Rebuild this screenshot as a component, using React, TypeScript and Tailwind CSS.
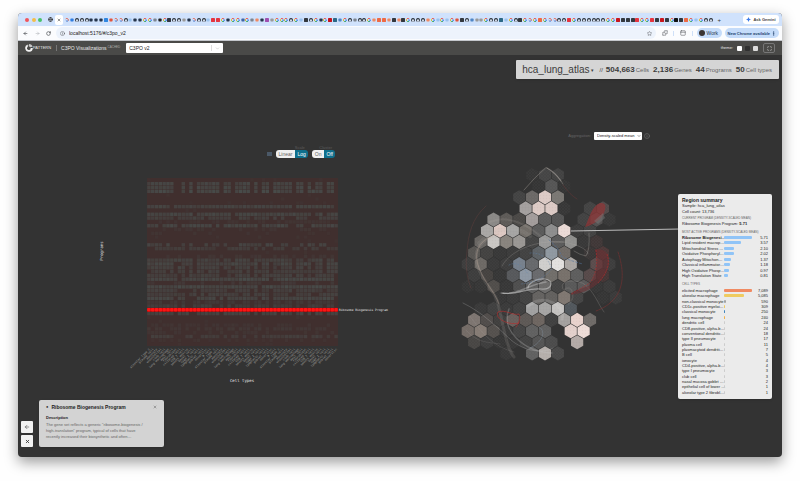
import React from "react";
import { ArrowLeft, ArrowRight, ChevronDown, Globe, Info, Maximize, MoreVertical, PanelTop, Puzzle, RotateCw, Star, X } from "lucide-react";

const FAVICONS =
  "sbhhhkkkBrsshlkkGGgAGDhhwkshhlRRGkGGLGgok" +
  "PwGGGhGlDhGkGXTuGhghhGoOOoDoDGhhhoGlGlGrDhuwwGhhTlG" +
  "hDGsGOGsshhRGhhhhhhGGXDDDRGGRDXDGKDOGlGhh";

const SQUARES: Record<string, string> = {
  B: "#2f86e0", R: "#e5343f", D: "#33383f", X: "#c8161d", T: "#2c6886", O: "#ee6a45", K: "#111111", P: "#a04fb0",
};
const DOTS: Record<string, string> = {
  k: "#26364d", r: "#e2553d", b: "#2f7de0", l: "#9cc3ee", g: "#7d8590", w: "#9a9a9a", o: "#f08a64", u: "#4f86c6", A: "#222222", L: "#3f66a8",
};

function Favicon({ kind }: { kind: string }) {
  return (
    <svg viewBox="0 0 10 10" className="h-[4px] w-[4px] shrink-0">
      {kind === "G" && (
        <g fill="none" strokeWidth="2.4">
          <path d="M8.2 2.4A4 4 0 0 0 1.6 3" stroke="#ea4335" />
          <path d="M1.6 3A4 4 0 0 0 1.8 7.4" stroke="#fbbc05" />
          <path d="M1.8 7.4A4 4 0 0 0 7.6 8" stroke="#34a853" />
          <path d="M7.6 8A4 4 0 0 0 9 5H5" stroke="#4285f4" />
        </g>
      )}
      {kind === "h" && (
        <>
          <circle cx="5" cy="5" r="4.8" fill="#24292f" />
          <path d="M3.4 9.8V7.6C1.6 6.4 2 3.4 5 3.4S8.4 6.4 6.6 7.600V9.800Z" fill="#dfeafa" />
        </>
      )}
      {kind === "s" && (
        <g fill="none" strokeWidth="2.200">
          <path d="M2 2a4 4 0 0 1 6 5" stroke="#e2553d" />
          <path d="M8 7a4 4 0 0 1-6-1" stroke="#3c6fc4" />
        </g>
      )}
      {SQUARES[kind] && <rect width="10" height="10" rx="1" fill={SQUARES[kind]} />}
      {DOTS[kind] && <rect x="1" y="1.500" width="8" height="7" rx="1.500" fill={DOTS[kind]} />}
    </svg>
  );
}

function BrowserChrome() {
  return (
    <header>
      <div className="flex h-[13px] items-center bg-[#d0e2fc] pl-[7px] pr-[3px]">
        <div className="flex w-[17px] shrink-0 justify-between">
          <span className="h-[4px] w-[4px] rounded-full bg-[#f0545c]" />
          <span className="h-[4px] w-[4px] rounded-full bg-[#f3bd4a]" />
          <span className="h-[4px] w-[4px] rounded-full bg-[#48c26a]" />
        </div>
        <Globe className="ml-[6px] h-[5px] w-[5px] shrink-0 text-[#333]" strokeWidth={3} />
        <div className="mx-[2px] flex h-[10px] w-[8px] shrink-0 items-center justify-center rounded-[2px] bg-white">
          <X className="h-[4px] w-[4px] text-[#333]" strokeWidth={3} />
        </div>
        <div className="flex min-w-0 flex-1 items-center justify-between">
          {FAVICONS.split("").map((k, i) => (
            <Favicon key={i} kind={k} />
          ))}
        </div>
        <button className="ml-[4px] text-[6px] leading-[8px] text-[#333]" aria-label="New tab">+</button>
        <button className="ml-[22px] flex h-[9px] w-[36px] shrink-0 items-center justify-center gap-[2px] rounded-[3px] bg-white text-[4px] font-bold leading-[6px] text-[#444]">
          <svg viewBox="0 0 10 10" className="h-[5px] w-[5px]"><path d="M5 0Q5.500 4.500 10 5Q5.500 5.500 5 10Q4.500 5.500 0 5Q4.500 4.500 5 0Z" fill="#3d7be8" /></svg>
          Ask Gemini
        </button>
      </div>
      <div className="flex h-[15px] items-center border-b border-[#c4c7cc] bg-[#fbfcfe] pl-[5px] pr-[3px] text-[#44474c]">
        <button aria-label="Back"><ArrowLeft className="h-[5px] w-[5px]" strokeWidth={3} /></button>
        <button aria-label="Forward" className="ml-[7px] text-[#9a9da2]"><ArrowRight className="h-[5px] w-[5px]" strokeWidth={2} /></button>
        <button aria-label="Reload" className="ml-[6px]"><RotateCw className="h-[5px] w-[5px]" strokeWidth={3} /></button>
        <div className="ml-[5px] flex h-[12px] min-w-0 flex-1 items-center rounded-full bg-[#edf3fc] pl-[4px] pr-[4px]">
          <Info className="h-[5px] w-[5px]" strokeWidth={2} />
          <input aria-label="Address" defaultValue="localhost:5176/#/c3po_v2" className="ml-[4px] min-w-0 flex-1 bg-transparent text-[5px] leading-[8px] text-[#222] outline-none" />
          <Star className="h-[5px] w-[5px]" strokeWidth={2} />
        </div>
        <Puzzle className="ml-[6px] h-[6px] w-[6px]" strokeWidth={2} />
        <span className="ml-[5px] h-[5px] w-px bg-[#cfe0f8]" />
        <PanelTop className="ml-[6px] h-[6px] w-[6px]" strokeWidth={2} />
        <span className="ml-[6px] h-[5px] w-px bg-[#cfe0f8]" />
        <button className="ml-[4px] flex h-[10px] w-[25px] items-center gap-[2px] rounded-full bg-[#c5dcfa] pl-[2px] text-[5px] leading-[7px] text-[#26364d]">
          <span className="h-[6px] w-[6px] rounded-full bg-[#3a3431]" />
          Work
        </button>
        <button className="ml-[3px] flex h-[10px] items-center justify-between gap-[1px] whitespace-nowrap rounded-full bg-[#c5dcfa] px-[3px] text-[4px] font-bold leading-[7px] text-[#26456f]">
          New Chrome available
          <MoreVertical className="h-[5px] w-[5px]" strokeWidth={3} />
        </button>
      </div>
    </header>
  );
}

function AppBar() {
  return (
    <div className="flex h-[14px] items-center bg-[#4a4a48] pl-[7px] pr-[7px] text-[#e6e6e6]">
      <svg viewBox="0 0 20 20" className="h-[8px] w-[8px]">
        <path d="M7 1A9.500 9.500 0 1 0 19.500 10L14 10A4.500 4.500 0 1 1 7 7Z" fill="#f2f2f2" />
        <path d="M10 0A9.500 9.500 0 0 1 19 7L13 8L9 5Z" fill="#c8c8c8" />
      </svg>
      <span className="text-[4px] leading-[6px]">PATTERN</span>
      <span className="ml-[5px] h-[6px] w-px bg-[#777]" />
      <h1 className="ml-[4px] text-[5px] leading-[7px]">C3PO Visualizations</h1>
      <span className="ml-px pb-[3px] text-[3px] leading-[4px] text-[#aaa]">CACHED</span>
      <div className="ml-[6px] flex h-[10px] w-[97px] items-center rounded-[1px] bg-white text-[#222]">
        <select aria-label="Visualization" className="h-full min-w-0 flex-1 appearance-none bg-transparent pl-[3px] text-[5px] leading-[8px]">
          <option>C3PO v2</option>
        </select>
        <span className="h-[6px] w-px bg-[#ddd]" />
        <ChevronDown className="mx-[3px] h-[5px] w-[5px] text-[#aaa]" strokeWidth={2} />
      </div>
      <span className="ml-auto text-[4px] leading-[6px]">theme:</span>
      <button aria-label="Light theme" className="ml-[4px] h-[5px] w-[5px] rounded-[1px] bg-white" />
      <button aria-label="Dark theme" className="ml-[3px] h-[5px] w-[5px] rounded-[1px] bg-[#303030]" />
      <button aria-label="Grey theme" className="ml-[3px] h-[5px] w-[5px] rounded-[1px] bg-[#dcdcdc]" />
      <button aria-label="Fullscreen" className="ml-[5px] flex h-[10px] w-[12px] items-center justify-center rounded-[2px] border border-[#777]">
        <Maximize className="h-[5px] w-[5px]" strokeWidth={2} />
      </button>
    </div>
  );
}

const STATS = [["504,663", "Cells"], ["2,136", "Genes"], ["44", "Programs"], ["50", "Cell types"]];

function DatasetBar() {
  return (
    <div className="flex justify-end pr-[3px] pt-[5px]">
      <div className="flex h-[19px] items-center rounded-[1px] bg-[#d5d5d5] pl-[6px] pr-[7px] text-[#3c3c3c] shadow">
        <button className="flex items-center text-[10px] leading-[14px]">
          hca_lung_atlas <span className="ml-px text-[5px]">▾</span>
        </button>
        <span className="ml-[6px] text-[6px] leading-[8px]">//</span>
        {STATS.map(([n, label], i) => (
          <span key={label} className={`flex items-baseline gap-px whitespace-nowrap ${i ? "ml-[4px]" : "ml-[3px]"}`}>
            <b className="text-[8px] leading-[10px]">{n}</b>
            <span className="text-[6px] leading-[10px] text-[#666]">{label}</span>
          </span>
        ))}
      </div>
    </div>
  );
}

const COLS = 50;
const ROWS = 44;
const COLUMN_MASK = "11111110010101111110110111101011011111011010110110";
// Share of expressed cells per program row: [inside masked columns, outside them, strength]
const ROW_PROFILE: Record<number, [number, number, number]> = {
  1: [1, 0, 0.9], 2: [1, 0.1, 0.9], 3: [1, 0.15, 1], 7: [0.95, 0.75, 0.8], 9: [0.95, 0.6, 0.9], 10: [0.8, 0.7, 0.7],
  11: [0.5, 0.5, 0.25], 12: [0.95, 0.8, 0.9], 13: [0.3, 0.4, 0.25], 14: [0.3, 0.2, 0.2], 15: [0.1, 0.2, 0.2], 17: [0.6, 0.5, 0.8],
  18: [0.7, 0.5, 0.6], 20: [0.4, 0.4, 0.3], 21: [0.95, 0.3, 0.8], 22: [1, 0.2, 0.9], 23: [0.95, 0.3, 0.8], 24: [0.9, 0.4, 0.7],
  25: [0.95, 0.3, 0.7], 26: [1, 0.8, 1], 27: [0.5, 0.5, 0.4], 28: [1, 0.85, 1], 29: [0.9, 0.5, 0.7], 30: [0.9, 0.5, 0.7],
  31: [0.95, 0.5, 0.9], 32: [0.7, 0.4, 0.4], 33: [0.9, 0.3, 0.6], 35: [0.9, 0.3, 0.8], 38: [0.5, 0.5, 0.25], 39: [0.7, 0.6, 0.35],
  40: [0.4, 0.4, 0.25], 41: [0.8, 0.7, 0.6], 42: [0.4, 0.4, 0.2],
};
const SELECTED_ROW = 34;
const PITCH = 3.82;

function noise(a: number, b: number) {
  const v = Math.sin(a * 127.1 + b * 311.7) * 43758.5453;
  return v - Math.floor(v);
}

const CELL_TYPES = [
  "alveolar type 2", "fibroblast", "goblet cell", "club cell", "basal cell", "plasma cell", "ciliated cell", "dendritic", "lung macrophage",
  "type I cell", "monocyte", "CD8 T cell", "B cell", "mast cell", "lymphatic cell", "endothelial", "smooth muscle",
];

function Heatmap() {
  const cells: React.ReactElement[] = [];
  for (let r = 0; r < ROWS; r++) {
    for (let c = 0; c < COLS; c++) {
      const x = 147 + c * PITCH;
      const y = 178 + r * PITCH;
      if (r === SELECTED_ROW) {
        cells.push(<rect key={`${r}-${c}`} x={x + 0.2} y={y + 0.2} width="3.400" height="3.400" rx="1" fill="#ff1414" />);
        continue;
      }
      const profile = ROW_PROFILE[r] ?? [0.05, 0.1, 0.15];
      const share = COLUMN_MASK[c] === "1" ? profile[0] : profile[1];
      const strength = noise(r, c) < share ? profile[2] * (0.65 + 0.35 * noise(c, r + 7)) : 0;
      if (strength > 0) {
        cells.push(<rect key={`${r}-${c}`} x={x + 0.2} y={y + 0.2} width="3.400" height="3.400" fill="#484c4a" opacity={strength} />);
      }
    }
  }
  return (
    <svg viewBox="18 160 382 230" className="block w-full" role="img" aria-label="Program activity by cell type">
      <rect x="147" y="178" width="191" height="168" fill="#402f2e" />
      <rect x="147" y="307.900" width="191" height="3.820" fill="#c00808" />
      {cells}
      <g fontFamily="Liberation Mono, monospace" fill="#a8a8a4">
        {Array.from({ length: COLS }, (_, c) => (
          <text key={c} fontSize="3" textAnchor="end" transform={`translate(${150 + c * PITCH} 349.500) rotate(-45)`}>
            {CELL_TYPES[(c * 5) % CELL_TYPES.length]}
          </text>
        ))}
      </g>
      <g fontFamily="DejaVu Sans Mono, monospace" fill="#e8e8e8">
        <text x="339" y="311" fontSize="3">Ribosome Biogenesis Program</text>
        <text x="242" y="382" fontSize="4" textAnchor="middle">Cell types</text>
        <text fontSize="4" textAnchor="middle" transform="translate(102.500 251) rotate(-90)">Programs</text>
      </g>
    </svg>
  );
}

function Toggle({ label, options }: { label: string; options: [string, string] }) {
  return (
    <div role="group" aria-label={label} className="flex flex-col items-end">
      <span className="pr-[3px] text-[4px] leading-[5px] text-[#5c5c5c]">{label}</span>
      <div className="flex h-[8px] rounded-[3px] text-[5px] leading-[8px]">
        <button className="rounded-l-[3px] bg-[#f0f0f0] px-[3px] text-[#666]">{options[0]}</button>
        <button className="rounded-r-[3px] bg-[#0f6f8c] px-[2px] text-white">{options[1]}</button>
      </div>
    </div>
  );
}

// First index of the hexagon run, then one colour per hexagon; "-" leaves a hole.
const HEX_ROWS: [number, string][] = [
  [-1, "363636 454545 424242"],
  [-1, "353535 555555 353535"],
  [-2, "434343 6b6866 dccac5 7a7773"],
  [-2, "a39f9e dccac5 dccac5 373737 - 434343 524a4a"],
  [-4, "8a8886 5d5a57 4a4846 a29c9b 5a5a5a 555555 - 424242 525050 383838"],
  [-5, "a8a6a4 ddc8c2 a5a4a3 716c67 5a5a5a 8d8d8d ead9d5 3b3b3b 424242"],
  [-5, "686562 c9c6c3 88837d 999693 444444 989898 5a5a5a 8f8f8d 383838 403737"],
  [-6, "575552 434241 383838 3b3b3b 424242 5d6266 8f98a0 6f6a66 - 3a3636 4d3838"],
  [-6, "3d3d3d 6c6864 3a3a3a 3d3d3d 76808c 66686b cfcecc e2e0de a9a5a2 - 5a4c4c 3d3d3d"],
  [-6, "3d3d3d 454240 363636 56585b 8d97a3 68696c 706d69 77706a 5d5d5d 564949 453535"],
  [-6, "353535 363636 504d4a 373737 4e4e4e 5f5f5f 6c6b6a 444444 585858 5a5858 363636 3a3a3a"],
  [-4, "373737 3a3a3a 424242 646260 62605e 7f7771 444444 - 353535 3a3a3a"],
  [-5, "393939 404040 3a3a3a 404040 a0a0a0 a5a4a3 c4c2c0 51575c"],
  [-6, "7d7570 504c4a 403f3e 685f5c 5d5855 6d6560 404040 a3a09e e8d2cc 6e6a67"],
  [-6, "746b66 857b74 54504d 393939 444444 606060 606060 - e3d0cb eedcd7"],
  [-6, "484644 3d3d3d 363636 383838 424242 545454 4b4b4b - b3aaa6"],
  [-3, "383838 - 606060 b5afab 484848"],
];

function hexPoints(cx: number, cy: number) {
  const h = 6.1;
  const r = 7.1;
  return [[0, -r], [h, -r / 2], [h, r / 2], [0, r], [-h, r / 2], [-h, -r / 2]].map(([dx, dy]) => `${cx + dx},${cy + dy}`).join(" ");
}

function HexMap() {
  return (
    <svg viewBox="400 140 382 250" className="block w-full" role="img" aria-label="Cell embedding">
      <defs>
        <pattern id="grain" width="3" height="3" patternUnits="userSpaceOnUse">
          <rect width="1" height="1" fill="#8d8580" />
          <rect x="1.500" y="1.500" width="1" height="1" fill="#ffffff" />
        </pattern>
      </defs>
      {HEX_ROWS.map(([start, colours], r) =>
        colours.split(" ").map((colour, i) => {
          if (colour === "-") return null;
          const cx = (r % 2 ? 551.4 : 545) + 12.87 * (start + i);
          const points = hexPoints(cx, 175 + 11.15 * r);
          return (
            <g key={`${r}-${i}`}>
              <polygon points={points} fill={`#${colour}`} />
              <polygon points={points} fill="url(#grain)" opacity="0.070" />
            </g>
          );
        }),
      )}
      <g fill="none" strokeLinecap="round" stroke="#b9b4ae">
        <path d="M524 190Q534 178 546 167.500Q558 175 563 184" stroke="#a8a09b" strokeWidth="0.700" opacity="0.600" />
        <path d="M547 168Q555 172 561 181" strokeWidth="1.200" opacity="0.400" />
        <path d="M563 185Q570 195 577 199" stroke="#7a3a3a" strokeWidth="0.500" opacity="0.700" />
        <path d="M486 206C472 218 468 235 467 252C465 266 467 278 471 288" stroke="#8a4a48" strokeWidth="0.500" opacity="0.500" />
        <path d="M496 236C480 240 474 250 477 264C482 282 492 288 497 300C503 320 505 346 514 357" strokeWidth="3" opacity="0.160" />
        <path d="M498 234C478 240 473 252 479 268C485 284 494 290 499 304" stroke="#c0aa9a" strokeWidth="1" opacity="0.350" />
        <path d="M502 266C512 248 540 240 562 242C578 244 588 250 588 254" strokeWidth="0.800" opacity="0.300" />
        <path d="M490 222C508 214 528 226 538 234C548 243 556 244 570 240" strokeWidth="2" opacity="0.150" />
        <path d="M479 243C500 222 520 228 530 236" strokeWidth="4" opacity="0.120" />
        <path d="M501 293C516 296 528 287 541 289C553 290 554 280 545 279C534 278 528 285 528 288" stroke="#dddddd" strokeWidth="1.200" opacity="0.500" />
        <path d="M503 293C518 295 530 284 546 282" stroke="#eeeeee" strokeWidth="1.500" opacity="0.300" />
        <path d="M563 289C558 280 576 279 584 284C594 291 598 304 604 312" strokeWidth="0.900" opacity="0.250" />
        <path d="M564 290C572 282 577 300 568 304" strokeWidth="1.500" opacity="0.150" />
        <path d="M463 303C482 312 498 328 511 340C524 351 542 354 553 348" stroke="#c8c8c8" strokeWidth="0.800" opacity="0.300" />
        <path d="M509 309C500 330 524 352 552 353" stroke="#c8c8c8" strokeWidth="1.500" opacity="0.280" />
        <path d="M528 306C545 292 566 307 562 319" stroke="#dddddd" strokeWidth="3" opacity="0.180" />
        <path d="M539 327C548 332 540 344 530 348" stroke="#91a9bd" strokeWidth="0.800" opacity="0.350" />
        <path d="M589 233Q590 250 586 256Q580 255 574 251" strokeWidth="0.900" opacity="0.350" />
        <path d="M466 330C478 344 490 342 500 344M470 316C486 340 499 348 514 352" strokeWidth="0.800" opacity="0.180" />
        <path d="M549 240Q559 248 562 257Q574 262 583 264" stroke="#5274a0" strokeWidth="0.600" strokeDasharray="2 2" />
        <path d="M530 253Q546 252 552 269Q541 282 521 284M509 265Q519 260 528 274" stroke="#5f83ab" strokeWidth="0.600" strokeDasharray="1 2" opacity="0.800" />
        <path d="M618 252C628 282 620 302 596 311" stroke="#8d3030" strokeWidth="0.500" strokeDasharray="2 1" />
        <path d="M519 323C508 326 494 318 498 312C505 309 513 316 519 314C521 318 519 323 516 327" stroke="#b52d2d" strokeWidth="0.800" opacity="0.800" />
      </g>
      <path d="M585 227C589 219 591 207 600 203Q607 202 605 210Q602 222 585 227Z" fill="#933536" opacity="0.700" />
      <path d="M594 221L603 213L605 218L598 224Z" fill="#777777" opacity="0.500" />
      <path d="M595 249Q611 248 609 266Q603 286 580 293L571 295L573 292L590 285Q600 270 595 249Z" fill="#6b3033" opacity="0.600" />
      <path d="M596 250Q599 270 590 283L571 294M607 254Q612 268 598 283" fill="none" stroke="#a82e2e" strokeWidth="0.700" strokeDasharray="2 1" />
      <path d="M571 231L680 229" stroke="#dddddd" strokeWidth="0.800" />
    </svg>
  );
}

const PROGRAMS: [string, string, number][] = [
  ["Ribosome Biogenesi…", "5.71", 28], ["Lipid resident macrop…", "3.57", 17], ["Mitochondrial Stress …", "2.10", 10], ["Oxidative Phosphoryl…", "2.02", 10],
  ["Autophagy Mitochon…", "1.37", 7], ["Classical inflammator…", "1.18", 6], ["High Oxidative Phosp…", "0.97", 5], ["High Translation State", "0.81", 4],
];
const TYPES: [string, string, number, string][] = [
  ["elicited macrophage", "7,089", 28, "#f08a62"], ["alveolar macrophage", "5,085", 20, "#efcb60"], ["non-classical monocyte", "590", 2, "#a3a3a3"],
  ["CD1c-positive myeloi…", "309", 1, "#efcb60"], ["classical monocyte", "250", 1, "#3f84bd"], ["lung macrophage", "240", 1, "#f0b04a"],
  ["dendritic cell", "24", 0, ""], ["CD8-positive, alpha-b…", "24", 0, ""], ["conventional dendritic…", "18", 0, ""], ["type II pneumocyte", "17", 0, ""],
  ["plasma cell", "11", 0, ""], ["plasmacytoid dendriti…", "7", 0, ""], ["B cell", "5", 0, ""], ["ionocyte", "4", 0, ""], ["CD4-positive, alpha-b…", "4", 0, ""],
  ["type I pneumocyte", "3", 0, ""], ["club cell", "3", 0, ""], ["nasal mucosa goblet …", "2", 0, ""], ["epithelial cell of lower …", "1", 0, ""], ["alveolar type 2 fibrobl…", "1", 0, ""],
];

function BarRow({ name, value, width, colour, strong }: { name: string; value: string; width: number; colour: string; strong?: boolean }) {
  return (
    <li className="flex h-[5px] items-center">
      <span className={`w-[42px] shrink-0 whitespace-nowrap text-[4px] leading-[5px] ${strong ? "font-bold" : ""}`}>{name}</span>
      <span className="h-[3px] rounded-[1px]" style={{ width: width || 0.5, background: colour || "#cccccc" }} />
      <span className="ml-auto text-[4px] leading-[5px]">{value}</span>
    </li>
  );
}

function RegionSummary() {
  return (
    <aside className="absolute right-[10px] top-[139px] w-[94px] rounded-[2px] bg-[#ebebeb] px-[4px] pb-[4px] pt-[3px] text-[4px] leading-[5px] text-[#222] shadow">
      <h2 className="text-[5px] font-bold leading-[6px]">Region summary</h2>
      <p className="leading-[6px]">Sample: hca_lung_atlas</p>
      <p>Cell count: 13,736</p>
      <h3 className="mt-[2px] whitespace-nowrap text-[3px] text-[#666]">CURRENT PROGRAM (DENSITY-SCALED MEAN)</h3>
      <p className="whitespace-nowrap">Ribosome Biogenesis Program: <b>5.71</b></p>
      <h3 className="mt-[4px] whitespace-nowrap text-[3px] text-[#666]">MOST ACTIVE PROGRAMS (DENSITY-SCALED MEAN)</h3>
      <ul className="flex h-[43px] flex-col justify-between">
        {PROGRAMS.map(([n, v, w], i) => <BarRow key={n} name={n} value={v} width={w} colour="#90c4f7" strong={i === 0} />)}
      </ul>
      <h3 className="mt-[4px] text-[3px] text-[#666]">CELL TYPES</h3>
      <ul className="mt-px flex h-[107px] flex-col justify-between">
        {TYPES.map(([n, v, w, c]) => <BarRow key={n} name={n} value={v} width={w} colour={c} />)}
      </ul>
    </aside>
  );
}

export default function App() {
  return (
    <div className="flex min-h-screen flex-col bg-[#fefefe] px-[18px] pb-[24px] pt-[13px] font-['Liberation_Sans',Arial,sans-serif]">
      <div className="flex flex-1 flex-col overflow-hidden rounded-[4px] bg-[#333] shadow-[0_5px_14px_rgba(0,0,0,0.4)]">
        <BrowserChrome />
        <AppBar />
        <main className="relative flex flex-1 flex-col">
          <DatasetBar />
          <div className="grid grid-cols-2">
            <section>
              <div className="flex items-end justify-end gap-[4px] pb-[2px] pr-[65px] pt-[66px]">
                <button aria-label="Download" className="mb-[2px] h-[4px] w-[5px] bg-[#4b5968]" />
                <Toggle label="Scale" options={["Linear", "Log"]} />
                <Toggle label="Cluster" options={["On", "Off"]} />
              </div>
              <Heatmap />
            </section>
            <section>
              <div className="flex items-center justify-end pr-[132px] pt-[53px]">
                <label htmlFor="aggregation" className="text-[4px] leading-[8px] text-[#666]">Aggregation:</label>
                <div className="ml-[3px] flex h-[8px] w-[48px] items-center rounded-[1px] bg-white">
                  <select id="aggregation" className="h-full min-w-0 flex-1 appearance-none bg-transparent pl-[3px] text-[4px] leading-[8px] text-[#111]">
                    <option>Density-scaled mean</option>
                  </select>
                  <ChevronDown className="mr-px h-[4px] w-[4px] text-[#333]" strokeWidth={3} />
                </div>
                <Info className="ml-[2px] h-[6px] w-[6px] text-[#777]" strokeWidth={2} />
              </div>
              <HexMap />
            </section>
          </div>
          <RegionSummary />
          <div className="mt-auto flex items-end pb-[10px] pl-[3px]">
            <div className="flex flex-col gap-[2px]">
              <button aria-label="Collapse" className="flex h-[12px] w-[12px] items-center justify-center rounded-[1px] bg-[#f2f2f2] text-[#333]">
                <ArrowLeft className="h-[6px] w-[6px]" strokeWidth={2} />
              </button>
              <button aria-label="Close panels" className="flex h-[12px] w-[12px] items-center justify-center rounded-[1px] bg-[#f2f2f2] text-[#333]">
                <X className="h-[5px] w-[5px]" strokeWidth={4} />
              </button>
            </div>
            <article className="ml-[6px] h-[47px] w-[125px] rounded-[2px] bg-[#d3d3d3] px-[7px] pt-[4px] text-[#222] shadow">
              <div className="flex items-center">
                <span className="text-[4px] leading-[6px]">●</span>
                <h2 className="ml-[3px] text-[5px] font-bold leading-[6px]">Ribosome Biogenesis Program</h2>
                <button aria-label="Close" className="ml-auto"><X className="h-[4px] w-[4px] text-[#666]" strokeWidth={3} /></button>
              </div>
              <h3 className="mt-[5px] text-[4px] font-bold leading-[6px]">Description</h3>
              <p className="mt-px whitespace-nowrap text-[4px] leading-[6px] text-[#666]">
                The gene set reflects a generic "ribosome-biogenesis /<br />
                high-translation" program, typical of cells that have<br />
                recently increased their biosynthetic and often…
              </p>
            </article>
          </div>
        </main>
      </div>
    </div>
  );
}
